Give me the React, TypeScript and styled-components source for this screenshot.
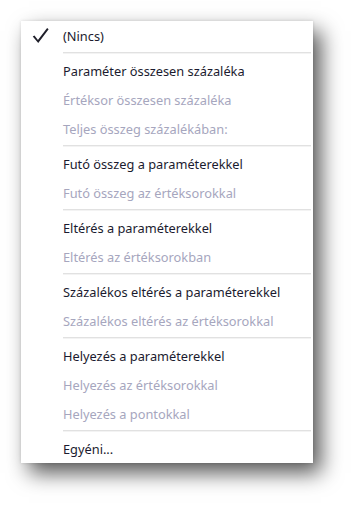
import React from 'react';
import styled, { createGlobalStyle } from 'styled-components';

const GlobalStyle = createGlobalStyle`
  html, body {
    margin: 0;
    padding: 0;
    background: #ffffff;
  }
  body {
    font-family: "Noto Sans", "Liberation Sans", sans-serif;
  }
`;

const Page = styled.div`
  width: 356px;
  height: 506px;
  padding: 21px 0 0 21px;
  box-sizing: border-box;
  background: #ffffff;
`;

const Menu = styled.div`
  width: 292px;
  height: 442px;
  background: #ffffff;
  display: flex;
  flex-direction: column;
  box-shadow: 0 0 3px rgba(0, 0, 0, 0.12), 8px 10px 20px rgba(0, 0, 0, 0.66);
`;

const Item = styled.div<{ $disabled?: boolean }>`
  height: 29px;
  display: flex;
  align-items: center;
  flex-shrink: 0;
  font-size: 12.8px;
  color: ${p => (p.$disabled ? '#a6a6be' : '#1b1b2f')};
`;

const CheckSlot = styled.div`
  width: 42px;
  height: 29px;
  display: flex;
  align-items: center;
  padding-left: 11px;
  box-sizing: border-box;
`;

const Label = styled.span`
  white-space: nowrap;
`;

const Separator = styled.div`
  height: 6px;
  flex-shrink: 0;
  display: flex;
  align-items: center;
  padding-left: 42px;
  &::after {
    content: '';
    display: block;
    width: 248px;
    height: 2px;
    background: linear-gradient(to bottom, #e1e1e1 50%, #f3f3f3 50%);
  }
`;

type Entry = { label: string; disabled?: boolean; checked?: boolean } | 'sep';

const entries: Entry[] = [
  { label: '(Nincs)', checked: true },
  'sep',
  { label: 'Paraméter összesen százaléka' },
  { label: 'Értéksor összesen százaléka', disabled: true },
  { label: 'Teljes összeg százalékában:', disabled: true },
  'sep',
  { label: 'Futó összeg a paraméterekkel' },
  { label: 'Futó összeg az értéksorokkal', disabled: true },
  'sep',
  { label: 'Eltérés a paraméterekkel' },
  { label: 'Eltérés az értéksorokban', disabled: true },
  'sep',
  { label: 'Százalékos eltérés a paraméterekkel' },
  { label: 'Százalékos eltérés az értéksorokkal', disabled: true },
  'sep',
  { label: 'Helyezés a paraméterekkel' },
  { label: 'Helyezés az értéksorokkal', disabled: true },
  { label: 'Helyezés a pontokkal', disabled: true },
  'sep',
  { label: 'Egyéni...' },
];

const CheckMark = () => (
  <svg width="17" height="17" viewBox="0 0 18 17">
    <path
      d="M0.8 9.6 L2.6 8.4 L6.3 13.2 L16 0.6 L17.6 1.8 L6.6 16.4 Z"
      fill="#1f1f2a"
    />
  </svg>
);

const App: React.FC = () => {
  return (
    <>
      <GlobalStyle />
      <Page>
        <Menu>
          {entries.map((e, i) =>
            e === 'sep' ? (
              <Separator key={i} />
            ) : (
              <Item key={i} $disabled={e.disabled}>
                <CheckSlot>{e.checked && <CheckMark />}</CheckSlot>
                <Label>{e.label}</Label>
              </Item>
            )
          )}
        </Menu>
      </Page>
    </>
  );
};

export default App;
